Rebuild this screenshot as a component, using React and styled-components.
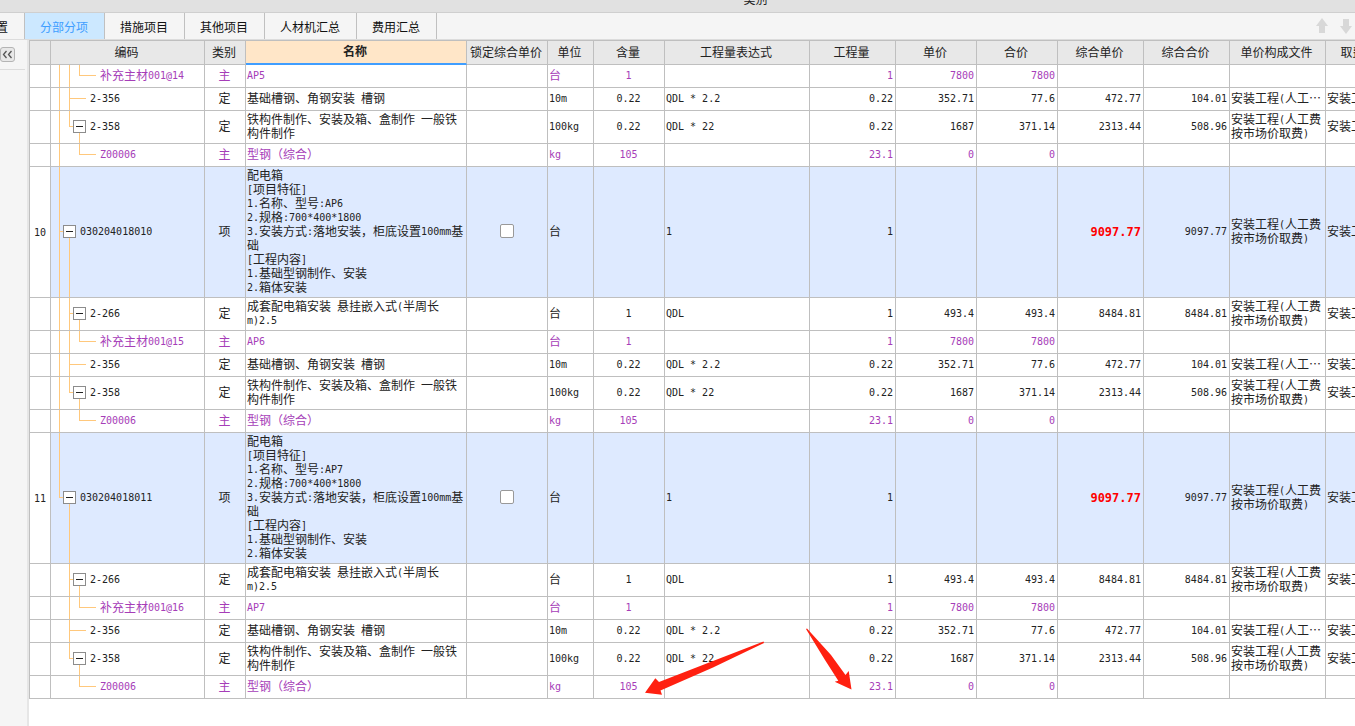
import React, { useState } from 'react'
import styled, { createGlobalStyle } from 'styled-components'

const GlobalStyle = createGlobalStyle`
  *, *::before, *::after {
    box-sizing: border-box;
  }

  body {
    margin: 0;
    background: #fff;
    color: #222;
    font-family: "Noto Sans CJK SC", sans-serif;
    font-size: 12px;
    line-height: 14px;
    overflow: hidden;
  }
`

const Page = styled.div`
  display: flex;
  flex-direction: column;
  height: 100vh;
  overflow: hidden;
`

const TitleBar = styled.header`
  display: flex;
  justify-content: center;
  align-items: flex-end;
  flex: none;
  height: 13px;
  padding: 0 0 6px 156px;
  background: #e1e1e1;
  border-bottom: 1px solid #cfcfcf;
  overflow: hidden;
`

const TabBar = styled.nav`
  display: flex;
  flex: none;
  height: 27px;
  background: #f5f5f5;
  border-bottom: 1px solid #dcdcdc;
  overflow: hidden;
`

const Tab = styled.button`
  flex: none;
  padding: 2px 16px 0 15px;
  border: none;
  border-right: 1px solid #c0c0c0;
  background: ${props => props.$active ? '#cce8ff' : 'transparent'};
  color: ${props => props.$active ? '#409eff' : '#111'};
  font: inherit;
  cursor: pointer;
`

const CutTab = styled(Tab)`
  margin-left: -4px;
  padding-left: 0;
`

const Movers = styled.div`
  display: flex;
  align-items: center;
  gap: 12px;
  margin-left: auto;
  padding-right: 3px;
`

const MoveButton = styled.button`
  display: flex;
  padding: 0;
  border: none;
  background: none;
  color: #d8d8d8;
`

const Body = styled.div`
  display: flex;
  flex: 1;
  min-height: 0;
`

const Sidebar = styled.aside`
  flex: none;
  width: 29px;
  background: #f5f5f5;
  border-right: 2px solid #e6e6e6;
`

const SideHead = styled.div`
  width: 25px;
  height: 30px;
  padding-top: 7px;
  border-bottom: 1px solid #dcdcdc;
`

const Collapse = styled.button`
  display: flex;
  align-items: center;
  justify-content: center;
  width: 15px;
  height: 15px;
  padding: 0;
  border: 1px solid #b4b4b4;
  border-radius: 3px;
  background: #e8e8e8;
  color: #555;
`

const Sheet = styled.main`
  position: relative;
  flex: 1;
  min-width: 0;
  overflow: hidden;
`

const Table = styled.table`
  width: 100%;
  min-width: 1377px;
  table-layout: fixed;
  border-collapse: separate;
  border-spacing: 0;
  border-left: 1px solid #bfbfbf;
  border-top: 1px solid #bfbfbf;
`

const Col = styled.col`
  width: ${props => props.$width ? `${props.$width}px` : 'auto'};
`

const HeadCell = styled.th`
  height: 24px;
  padding: 0 2px 2px 0;
  border-right: 1px solid #bfbfbf;
  border-bottom: ${props => props.$active ? '2px solid #409eff' : '1px solid #bfbfbf'};
  background: ${props => props.$active ? '#ffe6c8' : '#e8e8e8'};
  font-weight: ${props => props.$active ? 700 : 400};
  white-space: nowrap;
`

const Row = styled.tr`
  height: ${props => props.$tall ? 33 : 23}px;
  color: ${props => props.$kind === '主' ? '#a63db8' : '#222'};

  td + td {
    background: ${props => props.$kind === '项' ? '#deeaff' : '#fff'};
  }
`

const Cell = styled.td`
  height: 1px;
  padding: ${props => props.$flush ? '0' : '1px 2px 3px 1px'};
  border-right: 1px solid #bfbfbf;
  border-bottom: 1px solid #bfbfbf;
  text-align: ${props => props.$align || 'left'};
  vertical-align: middle;
  white-space: ${props => props.$nowrap ? 'nowrap' : 'pre-line'};
  overflow: hidden;
`

// ascii runs take half the advance of a hanzi
const Latin = styled.span`
  font-family: "DejaVu Sans Mono", monospace;
  font-size: 10px;
  line-height: 10px;
  vertical-align: 1px;
`

const Total = styled.strong`
  color: #f00;

  ${Latin} {
    font-size: 12px;
    vertical-align: baseline;
  }
`

const Tree = styled.div`
  display: flex;
  height: 100%;
  padding-left: 8px;
`

const treeColor = '#ffc87c'

const guideHeight = { none: '0', line: '100%', tee: '100%', corner: '50%' }

const Guide = styled.span`
  position: relative;
  flex: none;
  width: 10px;
  background: linear-gradient(${treeColor}, ${treeColor}) no-repeat 0 0 / 1px ${props => guideHeight[props.$kind]};

  &::before {
    content: '';
    display: ${props => props.$kind === 'tee' || props.$kind === 'corner' ? 'block' : 'none'};
    position: absolute;
    top: 0;
    bottom: 1px;
    width: 10px;
    height: 1px;
    margin: auto 0;
    background: ${treeColor};
  }
`

const Stem = styled.span`
  position: relative;
  flex: none;
  width: 11px;
  background: linear-gradient(${treeColor}, ${treeColor}) no-repeat 0 100% / 1px ${props => props.$open ? '50%' : '0'};

  &::before {
    content: '';
    position: absolute;
    top: 0;
    bottom: 1px;
    width: ${props => props.$open ? 0 : 7}px;
    height: 1px;
    margin: auto 0;
    background: ${treeColor};
  }
`

const Toggle = styled.button`
  position: absolute;
  top: 0;
  bottom: 1px;
  left: -6px;
  display: flex;
  align-items: center;
  justify-content: center;
  width: 13px;
  height: 13px;
  margin: auto 0;
  padding: 0;
  border: 1px solid #8c8c8c;
  background: #fff;

  &::before {
    content: '';
    width: 7px;
    height: 1px;
    background: #222;
  }
`

const Code = styled.span`
  align-self: center;
  padding-bottom: 2px;
  white-space: nowrap;
`

const Check = styled.input`
  display: block;
  width: 14px;
  height: 14px;
  margin: 0 auto;
  appearance: none;
  border: 1px solid #999;
  border-radius: 2px;
  background: #fff;

  &:checked {
    background: #409eff;
  }
`

const Marks = styled.svg`
  position: absolute;
  top: 586px;
  left: 611px;
  pointer-events: none;
`

const columns = [
  { title: '', width: 21 },
  { title: '编码', width: 154 },
  { title: '类别', width: 41 },
  { title: '名称', width: 221, active: true },
  { title: '锁定综合单价', width: 81 },
  { title: '单位', width: 46 },
  { title: '含量', width: 71 },
  { title: '工程量表达式', width: 145 },
  { title: '工程量', width: 86 },
  { title: '单价', width: 81 },
  { title: '合价', width: 81 },
  { title: '综合单价', width: 86 },
  { title: '综合合价', width: 86 },
  { title: '单价构成文件', width: 96 },
  { title: '取费文件' },
]

const FEE = '安装工程(人工费按市场价取费)'
const FEE_SHORT = '安装工程(人工…'

const material = (no, name, root) => ({
  tree: [root, 'line', 'corner'], code: `补充主材001@${no}`, kind: '主', name,
  unit: '台', content: '1', qty: '1', price: '7800', sum: '7800',
})

const steelRows = root => [
  {
    tree: [root, 'tee'], code: '2-356', kind: '定', name: '基础槽钢、角钢安装 槽钢',
    unit: '10m', content: '0.22', expr: 'QDL * 2.2', qty: '0.22', price: '352.71', sum: '77.6',
    unitTotal: '472.77', total: '104.01', file: FEE_SHORT, fee: FEE,
  },
  {
    tree: [root, 'corner'], open: true, tall: true, code: '2-358', kind: '定',
    name: '铁构件制作、安装及箱、盒制作 一般铁构件制作',
    unit: '100kg', content: '0.22', expr: 'QDL * 22', qty: '0.22', price: '1687', sum: '371.14',
    unitTotal: '2313.44', total: '508.96', file: FEE, fee: FEE,
  },
  {
    tree: [root, 'none', 'corner'], code: 'Z00006', kind: '主', name: '型钢（综合）',
    unit: 'kg', content: '105', qty: '23.1', price: '0', sum: '0',
  },
]

const boxRows = (index, box, no, last) => {
  const root = last ? 'none' : 'line'
  return [
    {
      index, tree: [last ? 'corner' : 'tee'], open: true, code: `0302040180${index}`, kind: '项',
      name: `配电箱\n[项目特征]\n1.名称、型号:${box}\n2.规格:700*400*1800\n3.安装方式:落地安装，柜底设置100mm基础\n[工程内容]\n1.基础型钢制作、安装\n2.箱体安装`,
      unit: '台', expr: '1', qty: '1', unitTotal: '9097.77', total: '9097.77', file: FEE, fee: FEE,
    },
    {
      tree: [root, 'tee'], open: true, tall: true, code: '2-266', kind: '定',
      name: '成套配电箱安装 悬挂嵌入式(半周长m)2.5',
      unit: '台', content: '1', expr: 'QDL', qty: '1', price: '493.4', sum: '493.4',
      unitTotal: '8484.81', total: '8484.81', file: FEE, fee: FEE,
    },
    material(no, box, root),
    ...steelRows(root),
  ]
}

const rows = [
  material('14', 'AP5', 'line'),
  ...steelRows('line'),
  ...boxRows('10', 'AP6', '15', false),
  ...boxRows('11', 'AP7', '16', true),
]

const Text = ({ children }) =>
  (children || '').split(/([\x20-\x7e]+)/).map((part, i) =>
    i % 2 ? <Latin key={i}>{part}</Latin> : part
  )

const TreeCell = ({ row }) => (
  <Cell $flush>
    <Tree>
      {row.tree.map((kind, i) => <Guide key={i} $kind={kind} />)}
      <Stem $open={row.open}>
        {row.open ? <Toggle aria-label={row.code} /> : null}
      </Stem>
      <Code><Text>{row.code}</Text></Code>
    </Tree>
  </Cell>
)

const DataRow = ({ row }) => (
  <Row $kind={row.kind} $tall={row.tall}>
    <Cell $align="center" $flush><Text>{row.index}</Text></Cell>
    <TreeCell row={row} />
    <Cell $align="center">{row.kind}</Cell>
    <Cell><Text>{row.name}</Text></Cell>
    <Cell>{row.index ? <Check type="checkbox" aria-label="锁定综合单价" /> : null}</Cell>
    <Cell><Text>{row.unit}</Text></Cell>
    <Cell $align="center"><Text>{row.content}</Text></Cell>
    <Cell><Text>{row.expr}</Text></Cell>
    <Cell $align="right"><Text>{row.qty}</Text></Cell>
    <Cell $align="right"><Text>{row.price}</Text></Cell>
    <Cell $align="right"><Text>{row.sum}</Text></Cell>
    <Cell $align="right">
      {row.index ? <Total><Text>{row.unitTotal}</Text></Total> : <Text>{row.unitTotal}</Text>}
    </Cell>
    <Cell $align="right"><Text>{row.total}</Text></Cell>
    <Cell><Text>{row.file}</Text></Cell>
    <Cell $nowrap><Text>{row.fee}</Text></Cell>
  </Row>
)

const tabs = ['分部分项', '措施项目', '其他项目', '人材机汇总', '费用汇总']

const App = () => {

  const [tab, setTab] = useState(tabs[0])

  return (
    <Page>
      <GlobalStyle />
      <TitleBar>类别</TitleBar>
      <TabBar>
        <CutTab>置</CutTab>
        {tabs.map(name => (
          <Tab key={name} $active={name === tab} onClick={() => setTab(name)}>{name}</Tab>
        ))}
        <Movers>
          <MoveButton aria-label="上移">
            <svg width="12" height="16" viewBox="0 0 12 16" fill="currentColor">
              <path d="M6 0L12 8H9V15H3V8H0Z" />
            </svg>
          </MoveButton>
          <MoveButton aria-label="下移">
            <svg width="12" height="16" viewBox="0 0 12 16" fill="currentColor">
              <path d="M6 16L12 8H9V1H3V8H0Z" />
            </svg>
          </MoveButton>
        </Movers>
      </TabBar>
      <Body>
        <Sidebar>
          <SideHead>
            <Collapse aria-label="收起">
              <svg width="11" height="9" viewBox="0 0 11 9" fill="none" stroke="currentColor" strokeWidth="1.3">
                <path d="M4.500 1L1.500 4.500L4.500 8M9.500 1L6.500 4.500L9.500 8" />
              </svg>
            </Collapse>
          </SideHead>
        </Sidebar>
        <Sheet>
          <Table>
            <colgroup>
              {columns.map((col, i) => <Col key={i} $width={col.width} />)}
            </colgroup>
            <thead>
              <tr>
                {columns.map((col, i) => (
                  <HeadCell key={i} $active={col.active}>{col.title}</HeadCell>
                ))}
              </tr>
            </thead>
            <tbody>
              {rows.map((row, i) => <DataRow key={i} row={row} />)}
            </tbody>
          </Table>
          <Marks width="220" height="74" viewBox="640 626 220 74" fill="#ff2010">
            <path d="M763.500 641.500L713 661L659 682L655.300 678.300L645 692.700L662 694.700L660.500 690.500L713 667.500L764 643Z" />
            <path d="M806 629L825 660L838.300 680.700L834.700 681.700L851.500 689.500L848.700 671L845.500 675L831 655L807 628.500Z" />
          </Marks>
        </Sheet>
      </Body>
    </Page>
  )
}

export default App
